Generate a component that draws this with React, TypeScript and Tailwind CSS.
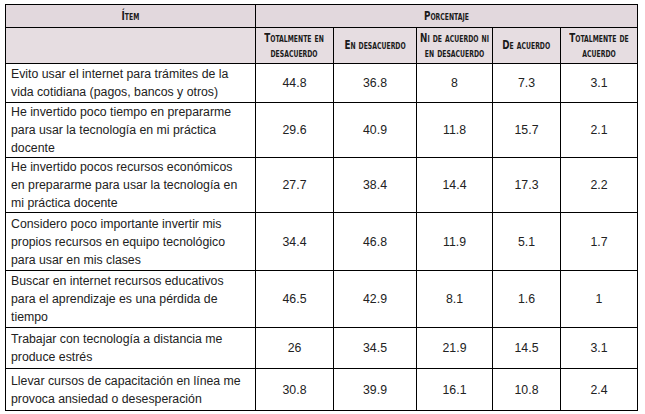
import React from "react";

const rows: { t: string[]; v: string[]; h: string }[] = [
  { t: ["Evito usar el internet para trámites de la", "vida cotidiana (pagos, bancos y otros)"], v: ["44.8", "36.8", "8", "7.3", "3.1"], h: "h-[39px]" },
  { t: ["He invertido poco tiempo en prepararme", "para usar la tecnología en mi práctica", "docente"], v: ["29.6", "40.9", "11.8", "15.7", "2.1"], h: "h-[55px]" },
  { t: ["He invertido pocos recursos económicos", "en prepararme para usar la tecnología en", "mi práctica docente"], v: ["27.7", "38.4", "14.4", "17.3", "2.2"], h: "h-[55px]" },
  { t: ["Considero poco importante invertir mis", "propios recursos en equipo tecnológico", "para usar en mis clases"], v: ["34.4", "46.8", "11.9", "5.1", "1.7"], h: "h-[58px]" },
  { t: ["Buscar en internet recursos educativos", "para el aprendizaje es una pérdida de", "tiempo"], v: ["46.5", "42.9", "8.1", "1.6", "1"], h: "h-[57px]" },
  { t: ["Trabajar con tecnología a distancia me", "produce estrés"], v: ["26", "34.5", "21.9", "14.5", "3.1"], h: "h-[41px]" },
  { t: ["Llevar cursos de capacitación en línea me", "provoca ansiedad o desesperación"], v: ["30.8", "39.9", "16.1", "10.8", "2.4"], h: "h-[42px]" },
];

const heads: string[][] = [
  ["Totalmente en", "desacuerdo"],
  ["En desacuerdo"],
  ["Ni de acuerdo ni", "en desacuerdo"],
  ["De acuerdo"],
  ["Totalmente de", "acuerdo"],
];

const hFont = "font-['DejaVu_Sans_Condensed','Liberation_Sans',sans-serif] font-bold [font-variant:small-caps] text-[11.5px] leading-[15px] text-[#1a1a1a] whitespace-nowrap";

function H({ lines }: { lines: string[] }) {
  return (
    <div className="flex justify-center">
      <div className="shrink-0 text-center scale-x-[0.85] origin-center">
        {lines.map((l, j) => (
          <div key={j}>{l}</div>
        ))}
      </div>
    </div>
  );
}

export default function App() {
  return (
    <div className="w-[645px] h-[414px] bg-white overflow-hidden pt-[4px] pl-[5px]">
      <table className="border-collapse table-fixed w-[632px] font-['Liberation_Sans',Arial,sans-serif] text-[#222222]">
        <colgroup>
          <col className="w-[250px]" />
          <col className="w-[78px]" />
          <col className="w-[83px]" />
          <col className="w-[76px]" />
          <col className="w-[68px]" />
          <col className="w-[77px]" />
        </colgroup>
        <thead>
          <tr className="h-[23px] bg-[#e2d8dd]">
            <th className={`border border-black text-center align-middle p-0 ${hFont}`}>
              <H lines={["Ítem"]} />
            </th>
            <th colSpan={5} className={`border border-black text-center align-middle p-0 ${hFont}`}>
              <H lines={["Porcentaje"]} />
            </th>
          </tr>
          <tr className="h-[36px] bg-[#e6dde1]">
            <th className="border border-black p-0"></th>
            {heads.map((h, i) => (
              <th key={i} className={`border border-black text-center align-middle p-0 ${hFont}`}>
                <H lines={h} />
              </th>
            ))}
          </tr>
        </thead>
        <tbody>
          {rows.map((r, i) => (
            <tr key={i} className={r.h}>
              <td className="border border-black px-[5px] py-0 align-middle text-[12.3px] leading-[18px] whitespace-nowrap">
                {r.t.map((l, j) => (
                  <div key={j}>{l}</div>
                ))}
              </td>
              {r.v.map((v, j) => (
                <td key={j} className="border border-black text-center align-middle text-[12.3px] leading-[18px] p-0">
                  {v}
                </td>
              ))}
            </tr>
          ))}
        </tbody>
      </table>
    </div>
  );
}
